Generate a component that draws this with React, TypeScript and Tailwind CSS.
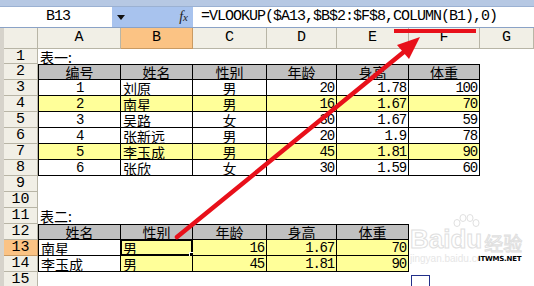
import React from 'react';

type Align = 'l' | 'c' | 'r';

interface CellSpec {
  t?: string;
  a?: Align;
  bg?: 'grey' | 'yellow';
  b?: boolean;
  top?: boolean;
  mono?: boolean;
  sel?: boolean;
}

interface RowSpec {
  n: number;
  h: string;
  sel?: boolean;
  cells: CellSpec[];
}

const widths = ['w-[83px]', 'w-[72px]', 'w-[74px]', 'w-[70px]', 'w-[72px]', 'w-[71px]', 'w-[54px]'];
const letters = ['A', 'B', 'C', 'D', 'E', 'F', 'G'];

// table one: 编号 / 姓名 / 性别 / 年龄 / 身高 / 体重
const people = [
  ['1', '刘原', '男', '20', '1.78', '100', ''],
  ['2', '南星', '男', '16', '1.67', '70', 'y'],
  ['3', '吴路', '女', '30', '1.67', '59', ''],
  ['4', '张新远', '男', '20', '1.9', '78', ''],
  ['5', '李玉成', '男', '45', '1.81', '90', 'y'],
  ['6', '张欣', '女', '30', '1.59', '60', ''],
];

const head = (t: string, top = true): CellSpec => ({ t, a: 'c', bg: 'grey', b: true, top });

const rows: RowSpec[] = [
  { n: 1, h: 'h-[15px]', cells: [{ t: '表一:', a: 'l' }] },
  { n: 2, h: 'h-[16px]', cells: ['编号', '姓名', '性别', '年龄', '身高', '体重'].map((t) => head(t)) },
  ...people.map((p, i) => {
    const bg = p[6] === 'y' ? ('yellow' as const) : undefined;
    return {
      n: i + 3,
      h: 'h-[16px]',
      cells: [
        { t: p[0], a: 'c' as Align, b: true, mono: true, bg },
        { t: p[1], a: 'l' as Align, b: true, bg },
        { t: p[2], a: 'c' as Align, b: true, bg },
        { t: p[3], a: 'r' as Align, b: true, mono: true, bg },
        { t: p[4], a: 'r' as Align, b: true, mono: true, bg },
        { t: p[5], a: 'r' as Align, b: true, mono: true, bg },
      ],
    };
  }),
  { n: 9, h: 'h-[16px]', cells: [] },
  { n: 10, h: 'h-[16px]', cells: [] },
  { n: 11, h: 'h-[16px]', cells: [{ t: '表二:', a: 'l' }] },
  { n: 12, h: 'h-[16px]', cells: ['姓名', '性别', '年龄', '身高', '体重'].map((t) => head(t)) },
  {
    n: 13,
    h: 'h-[16px]',
    sel: true,
    cells: [
      { t: '南星', a: 'l', b: true },
      { t: '男', a: 'l', b: true, bg: 'yellow', sel: true },
      { t: '16', a: 'r', b: true, bg: 'yellow', mono: true },
      { t: '1.67', a: 'r', b: true, bg: 'yellow', mono: true },
      { t: '70', a: 'r', b: true, bg: 'yellow', mono: true },
    ],
  },
  {
    n: 14,
    h: 'h-[16px]',
    cells: [
      { t: '李玉成', a: 'l', b: true },
      { t: '男', a: 'l', b: true, bg: 'yellow' },
      { t: '45', a: 'r', b: true, bg: 'yellow', mono: true },
      { t: '1.81', a: 'r', b: true, bg: 'yellow', mono: true },
      { t: '90', a: 'r', b: true, bg: 'yellow', mono: true },
    ],
  },
  { n: 15, h: 'h-[16px]', cells: [] },
];

function Cell({ spec, i }: { spec: CellSpec; i: number }) {
  const align =
    spec.a === 'r' ? 'justify-end pr-[2px]' : spec.a === 'c' ? 'justify-center' : 'justify-start pl-[2px]';
  const bg = spec.bg === 'grey' ? 'bg-[#c0c0c0]' : spec.bg === 'yellow' ? 'bg-[#ffff99]' : '';
  const font = spec.mono
    ? "font-['Liberation_Mono',monospace] text-[14px] tracking-[-1.2px]"
    : "font-['Noto_Sans_CJK_SC',sans-serif] text-[14px]";
  return (
    <div
      className={`relative shrink-0 flex items-center overflow-visible whitespace-nowrap leading-none text-black ${widths[i]} ${align} ${bg} ${font} ${
        spec.b ? 'border-r border-b border-black' : ''
      } ${spec.b && i === 0 ? 'border-l' : ''} ${spec.top ? 'border-t' : ''}`}
    >
      {spec.t}
      {spec.sel && (
        <div className="absolute inset-[-1px] border-2 border-black">
          <div className="absolute right-[-4px] bottom-[-4px] w-[6px] h-[6px] bg-black border border-white" />
        </div>
      )}
    </div>
  );
}

function SheetRow({ r }: { r: RowSpec }) {
  return (
    <div className={`flex ${r.h}`}>
      <div
        className={`w-[34px] shrink-0 flex items-center justify-center border-b border-r font-['Liberation_Mono',monospace] text-[15px] leading-none text-black ${
          r.sel ? 'bg-[#fbc384] border-[#c99a62]' : 'bg-[#f1efe6] border-[#b8b5a6]'
        }`}
      >
        {r.n}
      </div>
      {widths.map((_, i) => (
        <Cell key={i} spec={r.cells[i] ?? {}} i={i} />
      ))}
    </div>
  );
}

export default function App() {
  return (
    <div className="relative w-[534px] h-[286px] overflow-hidden bg-white flex flex-col">
      {/* window strip */}
      <div className="h-[7px] shrink-0 bg-[#b6c8e3] border-b border-[#9bb1d2]" />

      {/* name box + formula bar */}
      <div className="h-[21px] shrink-0 flex bg-white border-b border-[#8aa2c6]">
        <div className="w-[112px] pl-[4px] flex items-center justify-center font-['Liberation_Mono',monospace] text-[15px] tracking-[-1px] text-black">
          B13
        </div>
        <div className="w-[81px] bg-[#a8c3ee] flex items-center justify-between pl-[5px] pr-[5px]">
          <svg width="8" height="5" viewBox="0 0 8 5">
            <path d="M0 0 L8 0 L4 5 Z" fill="#111" />
          </svg>
          <span className="font-['Liberation_Serif',serif] italic text-[14px] text-[#222] leading-none">
            f<span className="text-[11px]">x</span>
          </span>
        </div>
        <div className="flex-1 flex items-center pl-[8px] font-['Liberation_Mono',monospace] text-[15px] tracking-[-1px] text-black">
          =VLOOKUP($A13,$B$2:$F$8,COLUMN(B1),0)
        </div>
      </div>

      {/* sheet */}
      <div className="flex flex-1">
        <div className="w-[4px] shrink-0 bg-[#d6d3cb]" />
        <div className="flex flex-col">
          <div className="flex h-[21px]">
            <div className="w-[34px] shrink-0 bg-[#f1efe6] border-r border-b border-[#b8b5a6]" />
            {letters.map((l, i) => (
              <div
                key={l}
                className={`${widths[i]} shrink-0 flex items-center justify-center border-r border-b font-['Liberation_Mono',monospace] text-[15px] text-black ${
                  l === 'B' ? 'bg-[#fbc384] border-[#c99a62]' : 'bg-[#f1efe6] border-[#b8b5a6]'
                }`}
              >
                {l}
              </div>
            ))}
          </div>
          {rows.map((r) => (
            <SheetRow key={r.n} r={r} />
          ))}
        </div>
      </div>

      {/* red mark under COLUMN(B1) */}
      <div className="absolute left-[394px] top-[29px] w-[82px] h-[4px] bg-[#e8101a]" />

      {/* arrow */}
      <svg className="absolute left-0 top-0 pointer-events-none" width="534" height="286" viewBox="0 0 534 286">
        <line x1="177" y1="237" x2="405" y2="51" stroke="#e8101a" strokeWidth="4.5" strokeLinecap="round" />
        <polygon points="420,37 397,45 409,59" fill="#e8101a" />
      </svg>

      {/* small tag below the table */}
      <div className="absolute left-[411px] top-[275px] w-[19px] h-[14px] border border-[#22308a]" />

      {/* watermark */}
      <div className="absolute left-[410px] top-[226px] pointer-events-none flex flex-col">
        <div className="flex items-end leading-none">
          <span className="font-['Liberation_Sans',sans-serif] font-bold text-[26px] text-transparent [-webkit-text-stroke:1px_#e0e0e0]">
            Bai
          </span>
          <span className="relative font-['Liberation_Sans',sans-serif] font-bold text-[26px] text-transparent [-webkit-text-stroke:1px_#e0e0e0]">
            du
            <svg className="absolute left-[2px] top-[-12px]" width="28" height="16" viewBox="0 0 28 16">
              <g fill="none" stroke="#e0e0e0" strokeWidth="1">
                <ellipse cx="5" cy="9" rx="3" ry="3.5" />
                <ellipse cx="11" cy="4" rx="3" ry="3.5" />
                <ellipse cx="18" cy="4" rx="3" ry="3.5" />
                <ellipse cx="24" cy="9" rx="3" ry="3.5" />
              </g>
            </svg>
          </span>
          <span className="font-['Noto_Sans_CJK_SC',sans-serif] text-[19px] text-transparent [-webkit-text-stroke:1px_#e0e0e0] ml-[2px]">
            经验
          </span>
        </div>
        <div className="flex items-center mt-[2px] leading-none">
          <span className="font-['Liberation_Sans',sans-serif] text-[10px] text-[#e6e6e6] w-[68px] overflow-hidden whitespace-nowrap">
            jingyan.baidu.com
          </span>
          <span className="font-['DejaVu_Sans',sans-serif] font-bold text-[7px] text-black tracking-[-0.2px]">
            ITWMS.NET
          </span>
        </div>
      </div>
    </div>
  );
}
